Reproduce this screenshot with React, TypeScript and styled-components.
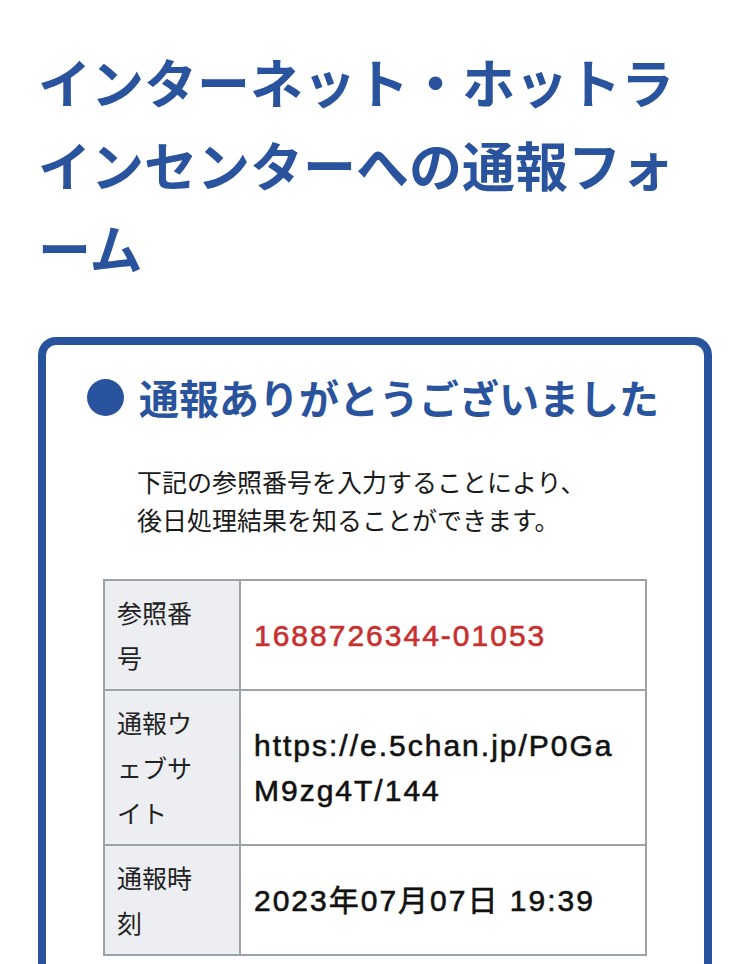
import React from 'react';
import styled, { createGlobalStyle } from 'styled-components';

const BLUE = '#2a539d';

const GlobalStyle = createGlobalStyle`
  html, body {
    margin: 0;
    padding: 0;
    background: #ffffff;
  }
  body {
    font-family: "Noto Sans CJK JP", sans-serif;
    color: #111111;
  }
`;

const Page = styled.div`
  padding: 40px 38px 0;
  line-break: loose;
`;

const Title = styled.h1`
  margin: 0;
  font-size: 53px;
  line-height: 83px;
  font-weight: 700;
  color: ${BLUE};
`;

const Card = styled.section`
  margin-top: 48px;
  border: 8px solid ${BLUE};
  border-bottom: none;
  border-radius: 18px 18px 0 0;
  padding: 22px 41px 40px;
`;

const Heading = styled.h2`
  display: flex;
  align-items: center;
  gap: 15px;
  margin: 0;
  font-size: 40px;
  line-height: 60px;
  font-weight: 700;
  color: ${BLUE};
`;

const Dot = styled.span`
  width: 37px;
  height: 37px;
  border-radius: 50%;
  background: ${BLUE};
  flex-shrink: 0;
`;

const Lead = styled.p`
  margin: 35px 0 0 50px;
  font-size: 25px;
  line-height: 38px;
  color: #1a1a1a;
`;

const Table = styled.table`
  margin: 41px 16px 0;
  width: calc(100% - 32px);
  border-collapse: collapse;
  border: 2px solid #9ba3a9;
`;

const Row = styled.tr`
  border-bottom: 2px solid #9ba3a9;
`;

const Th = styled.th`
  width: 94px;
  padding: 9px 28px 9px 12px;
  background: #eceef1;
  border-right: 2px solid #9ba3a9;
  text-align: left;
  vertical-align: top;
  font-size: 25px;
  line-height: 45px;
  font-weight: 400;
  color: #222222;
`;

const Td = styled.td<{ $accent?: boolean }>`
  padding: 9px 12px 9px 13px;
  vertical-align: middle;
  font-family: "Liberation Sans", "Noto Sans CJK JP", sans-serif;
  font-size: 30px;
  line-height: 45px;
  letter-spacing: 2px;
  word-break: break-all;
  -webkit-text-stroke: 0.6px currentColor;
  color: ${({ $accent }) => ($accent ? '#c8302f' : '#111111')};
`;

const rows = [
  { label: '参照番号', value: '1688726344-01053', accent: true },
  { label: '通報ウェブサイト', value: 'https://e.5chan.jp/P0GaM9zg4T/144' },
  { label: '通報時刻', value: '2023年07月07日 19:39' },
];

export default function App() {
  return (
    <Page lang="ja">
      <GlobalStyle />
      <Title>インターネット・ホットラインセンターへの通報フォーム</Title>
      <Card>
        <Heading>
          <Dot />
          通報ありがとうございました
        </Heading>
        <Lead>
          下記の参照番号を入力することにより、
          <br />
          後日処理結果を知ることができます。
        </Lead>
        <Table>
          <tbody>
            {rows.map((row) => (
              <Row key={row.label}>
                <Th>{row.label}</Th>
                <Td $accent={row.accent}>{row.value}</Td>
              </Row>
            ))}
          </tbody>
        </Table>
      </Card>
    </Page>
  );
}
